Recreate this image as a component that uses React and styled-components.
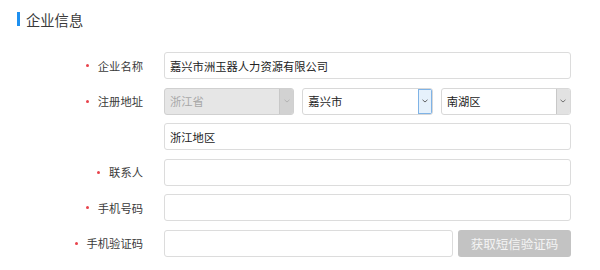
import styled, { createGlobalStyle } from "styled-components";

const GlobalStyle = createGlobalStyle`
    body {
        margin: 0;
        background: #fff;
        font-family: "Noto Sans CJK SC", "Noto Sans", sans-serif;
        color: #333;
    }
`

const Page = styled.div`
    width: 600px;
    height: 270px;
    overflow: hidden;
`

const Header = styled.h2`
    display: flex;
    align-items: center;
    margin: 0;
    padding: 10px 0 0 17px;
    height: 18px;
    font-size: 14.3px;
    font-weight: normal;
    color: #3a3a3a;
`

const TitleBar = styled.span`
    width: 3px;
    height: 14px;
    background: #1e90f0;
    margin-right: 6px;
`

const Form = styled.div`
    display: flex;
    flex-direction: column;
    gap: 8.6px;
    margin-top: 24px;
`

const Row = styled.div`
    display: flex;
    align-items: center;
    height: 27px;
`

const Label = styled.label`
    width: 143px;
    display: flex;
    justify-content: flex-end;
    align-items: center;
    gap: 9px;
    font-size: 11.3px;
    color: #3a3a3a;
`

const Dot = styled.span`
    width: 3px;
    height: 3px;
    border-radius: 50%;
    background: #e8434b;
`

const Field = styled.div`
    display: flex;
    gap: ${props => props.gap || 8}px;
    width: 407px;
    height: 27px;
    margin-left: 21px;
`

const Input = styled.div`
    flex: 1;
    box-sizing: border-box;
    display: flex;
    align-items: center;
    padding: 0 5px;
    border: 1px solid #dcdcdc;
    border-radius: 3px;
    font-size: 11.3px;
    color: #222;
`

const Select = styled.div`
    flex: 1;
    box-sizing: border-box;
    display: flex;
    border: 1px solid ${props => props.disabled ? '#d0d0d0' : '#d8d8d8'};
    border-radius: 3px;
    overflow: hidden;
    background: ${props => props.disabled ? '#e6e6e6' : '#fff'};
`

const SelectValue = styled.span`
    flex: 1;
    display: flex;
    align-items: center;
    padding: 0 5px;
    font-size: 11.3px;
    color: ${props => props.disabled ? '#a8a8a8' : '#222'};
`

const Arrow = styled.span`
    width: 14px;
    display: flex;
    align-items: center;
    justify-content: center;
    box-sizing: border-box;
    border-left: 1px solid ${props => props.focused ? '#7fb3e6' : '#c8c8c8'};
    background: ${props => props.focused ? '#e6f1fb' : props.disabled ? '#d2d2d2' : '#e2e2e2'};
    ${props => props.focused && 'outline: 1px solid #7fb3e6; outline-offset: -1px;'}
`

const SmsButton = styled.button`
    width: 113px;
    border: none;
    border-radius: 3px;
    background: #c3c3c3;
    color: #f4f4f4;
    font-family: inherit;
    font-size: 12.5px;
    padding: 0;
`

function Chevron({ color }) {
    return (
        <svg width="6" height="4" viewBox="0 0 6 4">
            <path d="M0.5 0.8 L3 3 L5.5 0.8" fill="none" stroke={color} strokeWidth="0.9" />
        </svg>
    );
}

function FormRow({ label, children, gap }) {
    return (
        <Row>
            <Label>
                {label && <Dot />}
                {label}
            </Label>
            <Field gap={gap}>{children}</Field>
        </Row>
    );
}

export default function App() {
    return (
        <Page>
            <GlobalStyle />
            <Header>
                <TitleBar />
                企业信息
            </Header>
            <Form>
                <FormRow label="企业名称">
                    <Input>嘉兴市洲玉器人力资源有限公司</Input>
                </FormRow>
                <FormRow label="注册地址">
                    <Select disabled>
                        <SelectValue disabled>浙江省</SelectValue>
                        <Arrow disabled><Chevron color="#b0b0b0" /></Arrow>
                    </Select>
                    <Select>
                        <SelectValue>嘉兴市</SelectValue>
                        <Arrow focused><Chevron color="#555" /></Arrow>
                    </Select>
                    <Select>
                        <SelectValue>南湖区</SelectValue>
                        <Arrow><Chevron color="#666" /></Arrow>
                    </Select>
                </FormRow>
                <FormRow>
                    <Input>浙江地区</Input>
                </FormRow>
                <FormRow label="联系人">
                    <Input />
                </FormRow>
                <FormRow label="手机号码">
                    <Input />
                </FormRow>
                <FormRow label="手机验证码" gap={5}>
                    <Input />
                    <SmsButton>获取短信验证码</SmsButton>
                </FormRow>
            </Form>
        </Page>
    );
}
